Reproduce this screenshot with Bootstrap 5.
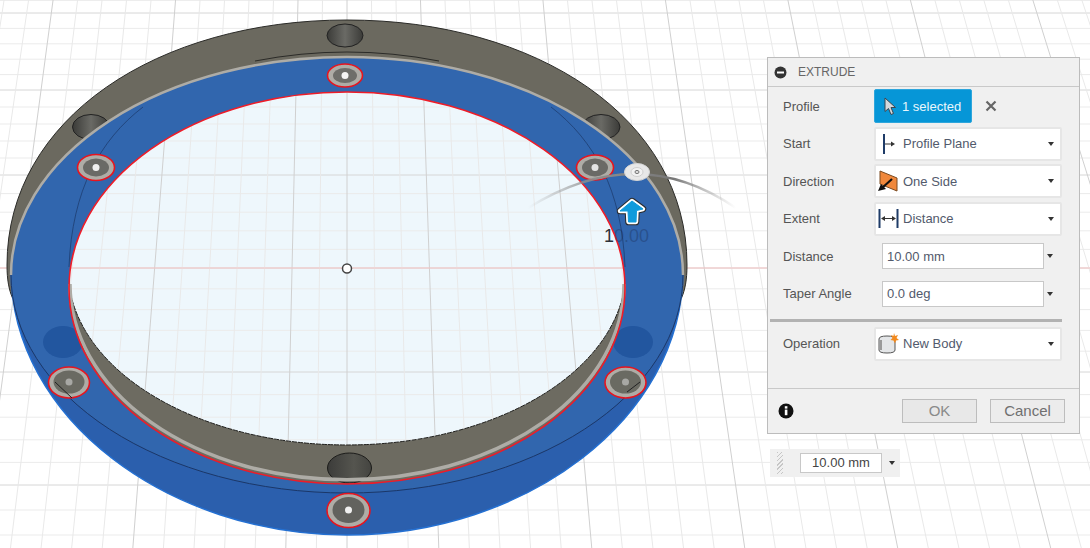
<!DOCTYPE html>
<html lang="en">
  <head>
    <meta charset="UTF-8" />
    <meta name="viewport" content="width=device-width, initial-scale=1.0" />
    <title>Extrude</title>
    <link
      href="https://cdn.jsdelivr.net/npm/bootstrap@5.3.2/dist/css/bootstrap.min.css"
      rel="stylesheet"
    />
    <style>
      body { margin: 0; overflow: hidden; background: #fff; font-family: "Liberation Sans", Arial, sans-serif; }
      .viewport { position: relative; width: 1090px; height: 548px; }
      .viewport > svg { display: block; }
      .model-label { font-family: "Liberation Sans", Arial, sans-serif; font-size: 18px; fill: rgba(28, 48, 90, 0.4); }
      .model-label .first-digit { fill: #2c3038; }

      /* dialog */
      .extrude-panel { position: absolute; left: 767px; top: 57px; width: 313px; height: 377px; background: #f0f0f0; border: 1px solid #bcbcbc; border-radius: 0; font-size: 13px; color: #555; }
      .extrude-head { height: 29px; padding: 0 0 0 6px; background: #f0f0f0; border-bottom: 1px solid #c9c9c9; border-radius: 0 !important; font-size: 12px; color: #666; }
      .extrude-title { margin-left: 3px; }
      .extrude-body { padding: 0.5px 0 0; }
      .field-row { height: 37.5px; }
      .field-label { width: 106px; padding-left: 15px; flex: none; }
      .pick-btn { width: 98px; height: 34px; padding: 0 0 0 9px; gap: 5px; background: #0696d7; color: #eaf6fc; border: 1px solid #2ea6dc; border-radius: 2px; font-size: 13px; }
      .pick-btn:hover { background: #0696d7; color: #eaf6fc; }
      .clear-x { margin-left: 13px; }
      .drop-field { width: 188px; height: 34px; padding: 0 6px 0 2px; gap: 4px; background: #fff; border: 2px solid #e6e6e6; border-radius: 2px; color: #525a6c; font-size: 13px; }
      .drop-field:hover { background: #fff; color: #525a6c; border-color: #e6e6e6; }
      .drop-field::after { margin-left: auto; color: #333; border-top-width: 4px; border-left-width: 3.5px; border-right-width: 3.5px; }
      .drop-field svg { flex: none; }
      .drop-field.with-start { padding-left: 6px; gap: 7px; }
      .value-field { width: 162px; height: 26px; margin-left: 8px; padding: 0 4px; background: #fff; border: 1px solid #c8c8c8; border-radius: 0; color: #525a6c; font-size: 13px; }
      .value-caret { width: 0; height: 0; margin-left: 3px; border-top: 4px solid #333; border-left: 3.5px solid transparent; border-right: 3.5px solid transparent; }
      .panel-rule { height: 3px; margin: 6px 17px 3.5px 2px; background: #b2b2b2; opacity: 1; border: 0; }
      .extrude-foot { height: 45px; padding: 0 14px 0 10px; background: #f0f0f0; border-top: 1px solid #c9c9c9; border-radius: 0 !important; }
      .dlg-btn { width: 75px; height: 24px; padding: 0; line-height: 22px; background: #e8e8e8; border: 1px solid #bdbdbd; border-radius: 0; font-size: 15px; color: #8a8a8a; }
      .dlg-btn:hover { background: #e8e8e8; color: #8a8a8a; border-color: #bdbdbd; }
      .dlg-btn.cancel-btn { margin-left: 13px; background: #ececec; color: #707070; }
      .info-dot { margin-right: auto; }

      /* dimension box under the dialog */
      .dim-box { position: absolute; left: 770px; top: 449px; width: 130px; height: 28px; padding: 0 0 0 7px; background: #f0f0f0; }
      .dim-grip { width: 6px; height: 22px; margin-right: 17px; background: repeating-linear-gradient(135deg, #c6c6c6 0 1px, transparent 1px 3px); }
      .dim-input { width: 82px; height: 20px; line-height: 18px; background: #fff; border: 1px solid #c8c8c8; color: #444; font-size: 13px; text-align: center; }
      .dim-box .value-caret { margin-left: 7px; }
    </style>
  </head>
  <body>
    <div class="viewport">
      <svg width="1090" height="548" viewBox="0 0 1090 548" xmlns="http://www.w3.org/2000/svg">
        <defs>
          <linearGradient id="boreShade" x1="0" x2="1" y1="0" y2="0">
            <stop offset="0" stop-color="#3b3b38" />
            <stop offset="0.5" stop-color="#6a6a65" />
            <stop offset="1" stop-color="#3b3b38" />
          </linearGradient>
          <linearGradient id="lowerBore" x1="0" x2="1" y1="0" y2="0">
            <stop offset="0" stop-color="#3c3c3a" />
            <stop offset="0.6" stop-color="#55554f" />
            <stop offset="1" stop-color="#444440" />
          </linearGradient>
          <linearGradient id="arcFade" x1="0" x2="1" y1="0" y2="0">
            <stop offset="0" stop-color="#999" stop-opacity="0" />
            <stop offset="0.35" stop-color="#8c8c8c" />
            <stop offset="0.7" stop-color="#777" />
            <stop offset="1" stop-color="#999" stop-opacity="0" />
          </linearGradient>
          <clipPath id="holeClip"><ellipse cx="347" cy="288" rx="278" ry="196" /></clipPath>
          <clipPath id="floorClip">
            <rect x="60" y="85" width="580" height="185" />
            <ellipse cx="347" cy="270" rx="279" ry="175" />
          </clipPath>
        </defs>

        <!-- ground grid, filled in by the script below -->
        <rect width="1090" height="548" fill="#fff" />
        <g id="grid"></g>

        <!-- dark ring -->
        <path d="M7,265 C7,118 158,20 347,20 C536,20 687,118 687,265 C687,280 685,290 681.5,298 L12.5,298 C9,290 7,280 7,265 Z" fill="#6b695f" stroke="#2b2b28" />
        <ellipse cx="345" cy="35.5" rx="18" ry="11.5" fill="url(#boreShade)" stroke="#222" />
        <ellipse cx="91" cy="127" rx="18.5" ry="12.5" fill="url(#boreShade)" stroke="#222" />
        <ellipse cx="601" cy="127" rx="19" ry="12.5" fill="url(#boreShade)" stroke="#222" />
        <path d="M255,61 Q347,43 439,61" fill="none" stroke="#2b2b28" />

        <!-- blue extrude preview -->
        <path d="M11,270 C11,420 170,535 347,535 C524,535 683,420 683,270 Z" fill="#2b5fad" stroke="#2470d2" stroke-width="1.5" />
        <ellipse cx="347" cy="275" rx="336" ry="218" fill="#3166ae" />
        <path d="M11,275 A336,218 0 0 0 683,275" fill="none" stroke="#1b3768" />
        <path d="M11,275 A336,218 0 0 1 683,275" fill="none" stroke="#aeaca6" stroke-width="2.5" />
        <path d="M143,107 C100,140 72,190 69,267 M551,107 C594,140 622,190 625,267" fill="none" stroke="#1b3768" stroke-opacity="0.7" />
        <ellipse cx="63" cy="342" rx="20" ry="16" fill="#22569f" />
        <ellipse cx="633" cy="342" rx="20" ry="16" fill="#22569f" />

        <!-- centre opening -->
        <g clip-path="url(#holeClip)">
          <rect x="60" y="85" width="580" height="410" fill="#6d6b61" />
          <ellipse cx="349.5" cy="468" rx="22" ry="15" fill="url(#lowerBore)" stroke="#1c1c1a" />
          <rect x="60" y="85" width="580" height="185" fill="#eef7fc" />
          <ellipse cx="347" cy="270" rx="279" ry="175" fill="#eef7fc" />
          <use href="#grid" clip-path="url(#floorClip)" />
          <path d="M68,270 A279,175 0 0 0 626,270" fill="none" stroke="#1f1f1d" stroke-dasharray="5 1" />
        </g>
        <path d="M70,285 A276,195 0 0 0 624,285" fill="none" stroke="#aeaca6" stroke-width="3.5" transform="translate(0,-1)" />
        <ellipse cx="347" cy="288" rx="278" ry="196" fill="none" stroke="#ee1c28" stroke-width="1.6" />

        <!-- profile circles -->
        <g id="profileHoles" stroke="#e8141e" stroke-width="1.6">
          <ellipse cx="345" cy="75.5" rx="17.5" ry="11.5" fill="#aeaca6" />
          <ellipse cx="345" cy="75.5" rx="12" ry="7.5" fill="#6e6e6a" stroke="none" />
          <circle cx="345" cy="75.5" r="3.5" fill="#f4f4f4" stroke="none" />

          <ellipse cx="96" cy="167.5" rx="18.5" ry="13" fill="#aeaca6" />
          <ellipse cx="96" cy="167.5" rx="13" ry="9" fill="#6a6a66" stroke="none" />
          <circle cx="96" cy="167.5" r="3.5" fill="#f0f0f0" stroke="none" />

          <ellipse cx="595" cy="167.5" rx="18.5" ry="12.5" fill="#aeaca6" />
          <ellipse cx="595" cy="167.5" rx="13" ry="9" fill="#6a6a66" stroke="none" />
          <circle cx="595" cy="167.5" r="3.5" fill="#e4e4e4" stroke="none" />

          <ellipse cx="69" cy="382.5" rx="20.5" ry="15.5" fill="#aeaca6" />
          <ellipse cx="69" cy="382" rx="15.5" ry="11.5" fill="#6a6a62" stroke="none" />
          <circle cx="69" cy="382" r="3.5" fill="#a8a8a4" stroke="none" />

          <ellipse cx="625.5" cy="382.5" rx="20.5" ry="15.5" fill="#aeaca6" />
          <ellipse cx="625.5" cy="382" rx="15.5" ry="11.5" fill="#6a6a62" stroke="none" />
          <circle cx="625.5" cy="382" r="3.5" fill="#a8a8a4" stroke="none" />

          <ellipse cx="348.5" cy="510.5" rx="21.5" ry="17" fill="#aeaca6" />
          <ellipse cx="348.5" cy="510" rx="16" ry="13" fill="#62625e" stroke="none" />
          <circle cx="348.5" cy="510" r="3.5" fill="#f0f0f0" stroke="none" />
        </g>
        <path d="M55,382 L72,398 M627,392 L640,382" fill="none" stroke="#222" />

        <!-- origin -->
        <circle cx="347" cy="268.5" r="4.5" fill="#fff" stroke="#444" stroke-width="1.5" />

        <!-- manipulator -->
        <path d="M528,208 Q637,140 736,208" fill="none" stroke="url(#arcFade)" stroke-width="2.5" />
        <ellipse cx="637" cy="172" rx="12.5" ry="8.5" fill="#e8e8e8" stroke="#d4d4d4" />
        <ellipse cx="637" cy="172" rx="6" ry="4.5" fill="#f2f2f2" stroke="#cfcfcf" />
        <ellipse cx="637" cy="172" rx="2" ry="1.6" fill="#ddd" stroke="#777" />
        <text class="model-label" x="604" y="242"><tspan class="first-digit">1</tspan>0.00</text>
        <path d="M632,201 L643,209 L636.5,210.5 L636,222 L628.5,222 L628,211 L620,211 Z" fill="#0f9bdc" stroke="#2a2a2a" stroke-width="6.5" stroke-linejoin="round" />
        <path d="M632,201 L643,209 L636.5,210.5 L636,222 L628.5,222 L628,211 L620,211 Z" fill="#0f9bdc" stroke="#fff" stroke-width="4.5" stroke-linejoin="round" />
        <path d="M632,201 L643,209 L636.5,210.5 L636,222 L628.5,222 L628,211 L620,211 Z" fill="#0f9bdc" stroke="#0f9bdc" stroke-width="1" stroke-linejoin="round" />
      </svg>

      <!-- Extrude dialog -->
      <div class="card extrude-panel">
        <div class="card-header extrude-head d-flex align-items-center">
          <svg width="13" height="13" viewBox="0 0 13 13" class="me-2 ms-0">
            <circle cx="6.5" cy="6.5" r="6" fill="#333" />
            <rect x="3" y="5.5" width="7" height="2" fill="#fff" />
          </svg>
          <span class="extrude-title">EXTRUDE</span>
        </div>

        <div class="card-body extrude-body">
          <div class="field-row d-flex align-items-center">
            <span class="field-label">Profile</span>
            <button type="button" class="btn pick-btn d-flex align-items-center">
              <svg width="13" height="19" viewBox="0 0 13 19">
                <path d="M1,1 L1,14.5 L4.5,11.5 L7,17.5 L9.5,16.5 L7,10.5 L11.5,10.5 Z" fill="#d4d8dc" stroke="#3b4650" />
              </svg>
              1 selected
            </button>
            <svg class="clear-x" width="12" height="12" viewBox="0 0 12 12">
              <path d="M1.5,1.5 L10.5,10.5 M10.5,1.5 L1.5,10.5" stroke="#666" stroke-width="2.2" />
            </svg>
          </div>

          <div class="field-row d-flex align-items-center">
            <span class="field-label">Start</span>
            <button type="button" class="btn drop-field with-start dropdown-toggle d-flex align-items-center">
              <svg width="14" height="20" viewBox="0 0 14 20">
                <rect x="1" y="0" width="2" height="20" fill="#1f3c68" />
                <path d="M3,10 L10,10" stroke="#333" />
                <path d="M9,7.5 L13,10 L9,12.5 Z" fill="#333" />
              </svg>
              Profile Plane
            </button>
          </div>

          <div class="field-row d-flex align-items-center">
            <span class="field-label">Direction</span>
            <button type="button" class="btn drop-field dropdown-toggle d-flex align-items-center">
              <svg width="21" height="22" viewBox="0 0 21 22">
                <path d="M2,1 L19,8 L19,21 L2,14 Z" fill="#f0883c" stroke="#7a4a20" />
                <path d="M14,9 L4,18" stroke="#111" stroke-width="2.2" />
                <path d="M0,21 L3,14 L8,19 Z" fill="#111" />
              </svg>
              One Side
            </button>
          </div>

          <div class="field-row d-flex align-items-center">
            <span class="field-label">Extent</span>
            <button type="button" class="btn drop-field dropdown-toggle d-flex align-items-center">
              <svg width="21" height="19" viewBox="0 0 21 19">
                <rect x="0.5" y="0" width="2" height="19" fill="#1f3c68" />
                <rect x="18.5" y="0" width="2" height="19" fill="#1f3c68" />
                <path d="M5,9.5 L16,9.5" stroke="#333" />
                <path d="M7,7 L3,9.5 L7,12 Z M14,7 L18,9.5 L14,12 Z" fill="#333" />
              </svg>
              Distance
            </button>
          </div>

          <div class="field-row d-flex align-items-center">
            <span class="field-label">Distance</span>
            <div class="value-field d-flex align-items-center">10.00 mm</div>
            <span class="value-caret"></span>
          </div>

          <div class="field-row d-flex align-items-center">
            <span class="field-label">Taper Angle</span>
            <div class="value-field d-flex align-items-center">0.0 deg</div>
            <span class="value-caret"></span>
          </div>

          <hr class="panel-rule" />

          <div class="field-row d-flex align-items-center">
            <span class="field-label">Operation</span>
            <button type="button" class="btn drop-field dropdown-toggle d-flex align-items-center">
              <svg width="21" height="21" viewBox="0 0 21 21">
                <path d="M1,6 Q1,3 9,3 Q17,3 17,6 L17,17 Q17,20 9,20 Q1,20 1,17 Z" fill="#e4e6e8" stroke="#555" />
                <path d="M3,7 L3,17" stroke="#9a9a9a" stroke-width="2" />
                <path d="M16,0 L17,3 L20,2 L18.5,5 L21,7 L18,7.5 L17,10.5 L15.5,7.5 L12.5,7 L14.5,5 L13,2 L15.5,3 Z" fill="#f28a1e" />
              </svg>
              New Body
            </button>
          </div>
        </div>

        <div class="card-footer extrude-foot d-flex align-items-center">
          <svg class="info-dot" width="16" height="16" viewBox="0 0 16 16">
            <circle cx="8" cy="8" r="7.5" fill="#111" />
            <rect x="6.8" y="6.6" width="2.6" height="5.6" fill="#fff" />
            <rect x="6.8" y="3.2" width="2.6" height="2.4" fill="#fff" />
          </svg>
          <button type="button" class="btn dlg-btn">OK</button>
          <button type="button" class="btn dlg-btn cancel-btn">Cancel</button>
        </div>
      </div>

      <!-- dimension input on the canvas -->
      <div class="dim-box d-flex align-items-center">
        <span class="dim-grip"></span>
        <div class="dim-input">10.00 mm</div>
        <span class="value-caret"></span>
      </div>
    </div>

    <script src="https://cdn.jsdelivr.net/npm/bootstrap@5.3.2/dist/js/bootstrap.bundle.min.js"></script>
    <script>
      // perspective grid: every 5th line is a major one
      var grid = document.getElementById("grid");
      var ns = "http://www.w3.org/2000/svg";

      function addLine(x1, y1, x2, y2, color) {
        var line = document.createElementNS(ns, "line");
        line.setAttribute("x1", x1);
        line.setAttribute("y1", y1);
        line.setAttribute("x2", x2);
        line.setAttribute("y2", y2);
        line.setAttribute("stroke", color);
        grid.appendChild(line);
      }

      var majors = [-50, 13, 90, 175, 268, 372, 485, 610];
      for (var i = 0; i < majors.length - 1; i++) {
        for (var j = 0; j < 5; j++) {
          var y = majors[i] + ((majors[i + 1] - majors[i]) * j) / 5;
          addLine(0, y, 1090, y, j == 0 ? "#d6d6d6" : "#ebebeb");
        }
      }

      // 27.5px apart on the axis, lines lean towards a far vanishing point
      var vanish = 2200;
      for (var n = -15; n <= 30; n++) {
        var at0 = (n * 27.5) / (1 + 270 / vanish);
        var at548 = at0 * (1 + 548 / vanish);
        var major = ((n + 2) % 5 + 5) % 5 == 0 || n == 0;
        addLine(347 + at0, 0, 347 + at548, 548, major ? "#d0d0d0" : "#e9e9e9");
      }

      addLine(0, 268, 1090, 268, "#f6c4c4");
    </script>
  </body>
</html>
